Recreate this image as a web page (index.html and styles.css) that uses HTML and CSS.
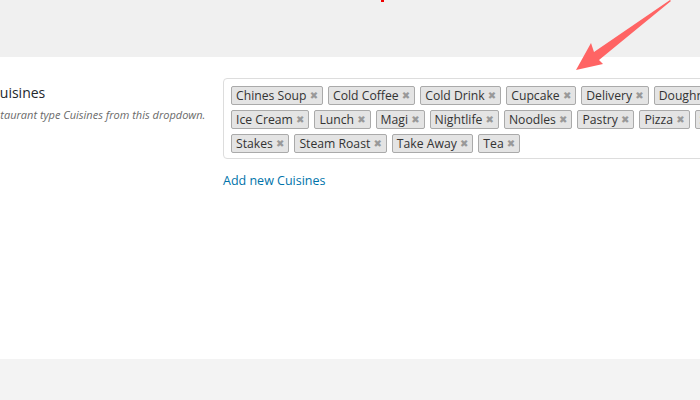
FILE: index.html
```html
<!DOCTYPE html>
<html>
<head>
<meta charset="utf-8">
<link rel="stylesheet" href="styles.css">
</head>
<body>
<div class="top"></div>
<div class="panel">
  <div class="row">
    <div class="th">
      <div class="label">Cuisines</div>
      <div class="desc">Select restaurant type Cuisines from this dropdown.</div>
    </div>
    <div class="td">
      <div class="select">
        <span class="tag">Chines Soup <b>✖</b></span>
        <span class="tag">Cold Coffee <b>✖</b></span>
        <span class="tag">Cold Drink <b>✖</b></span>
        <span class="tag">Cupcake <b>✖</b></span>
        <span class="tag">Delivery <b>✖</b></span>
        <span class="tag">Doughnuts <b>✖</b></span>
        <span class="tag">Fast Food <b>✖</b></span>
        <span class="brk"></span>
        <span class="tag">Ice Cream <b>✖</b></span>
        <span class="tag">Lunch <b>✖</b></span>
        <span class="tag">Magi <b>✖</b></span>
        <span class="tag">Nightlife <b>✖</b></span>
        <span class="tag">Noodles <b>✖</b></span>
        <span class="tag">Pastry <b>✖</b></span>
        <span class="tag">Pizza <b>✖</b></span>
        <span class="tag">Sandwich <b>✖</b></span>
        <span class="brk"></span>
        <span class="tag">Stakes <b>✖</b></span>
        <span class="tag">Steam Roast <b>✖</b></span>
        <span class="tag">Take Away <b>✖</b></span>
        <span class="tag">Tea <b>✖</b></span>
      </div>
      <a class="add" href="#">Add new Cuisines</a>
    </div>
  </div>
</div>
<div class="bottom"></div>
<svg class="arrow" width="700" height="80" viewBox="0 0 700 80">
  <polygon points="576,70 591,43 594,52 670,0 671,1 599,60 603,64" fill="#ff6464"/>
</svg>
<span class="mark"></span>
</body>
</html>
```

FILE: styles.css
```css
html, body {
  margin: 0;
  padding: 0;
  width: 700px;
  height: 400px;
  overflow: hidden;
  background: #f3f3f3;
  font-family: "Open Sans", sans-serif;
  position: relative;
}
.top {
  height: 57px;
  background: #f0f0f0;
}
.panel {
  height: 302px;
  background: #fff;
  overflow: hidden;
}
.bottom {
  height: 41px;
  background: #f3f3f3;
}
.row {
  display: flex;
  padding-top: 21px;
  margin-left: -9px;
}
.th {
  width: 232px;
  flex: none;
  padding-top: 5px;
}
.label {
  font-size: 14px;
  color: #23282d;
  line-height: 20px;
}
.desc {
  font-size: 11px;
  font-style: italic;
  color: #6a6a6a;
  margin-top: 4px;
  margin-left: -36px;
  white-space: nowrap;
}
.td {
  flex: none;
}
.select {
  width: 640px;
  border: 1px solid #ddd;
  border-radius: 4px;
  padding: 2px 7px 5px 7px;
  display: flex;
  flex-wrap: wrap;
  column-gap: 5px;
  box-sizing: border-box;
}
.brk {
  flex-basis: 100%;
  height: 0;
}
.tag {
  margin-top: 5px;
  height: 19px;
  box-sizing: border-box;
  background: #e4e4e4;
  border: 1px solid #aaa;
  border-radius: 2px;
  padding: 0 4px;
  font-size: 12.2px;
  line-height: 17px;
  color: #333;
  white-space: nowrap;
}
.tag b {
  color: #999;
  font-family: "DejaVu Sans", sans-serif;
  font-weight: 400;
  font-size: 10px;
  vertical-align: 1px;
}
.add {
  display: block;
  margin-top: 13px;
  font-size: 12.5px;
  color: #0073aa;
  text-decoration: none;
}
.arrow {
  position: absolute;
  left: 0;
  top: 0;
}
.mark {
  position: absolute;
  left: 381px;
  top: 0;
  width: 3px;
  height: 2px;
  background: #e00;
}
```
